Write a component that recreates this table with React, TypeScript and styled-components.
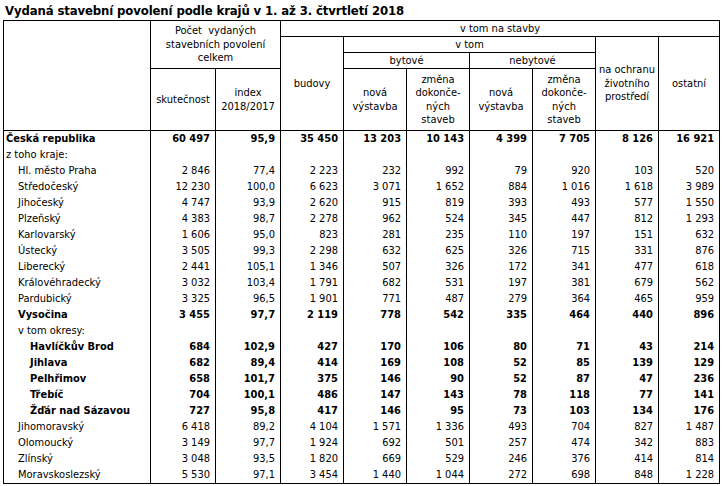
import React, { FC } from 'react'
import styled, { createGlobalStyle } from 'styled-components'

const GlobalStyle = createGlobalStyle`
  body {
    margin: 0;
    background: #fff;
    color: #000;
    font-family: "DejaVu Sans Condensed", "DejaVu Sans", sans-serif;
  }
`

const Page = styled.div`
  padding: 0 0 0 3px;
  width: 716px;
`

const Title = styled.h1`
  margin: 0;
  padding: 3px 0 0 2px;
  height: 20px;
  box-sizing: border-box;
  font-size: 13px;
  line-height: 15px;
  font-weight: 700;
  letter-spacing: -0.12px;
  white-space: nowrap;
`

const Table = styled.table`
  border-collapse: collapse;
  table-layout: fixed;
  width: 716px;
  font-size: 11px;
  border: 1px solid #000;
`

const HeadRow = styled.tr<{ $h: number }>`
  height: ${(p) => p.$h}px;
`

const Th = styled.th`
  border: 1px solid #000;
  padding: 0 1px;
  font-weight: 400;
  text-align: center;
  vertical-align: middle;
  line-height: 13.5px;
  white-space: nowrap;
`

const BodyRow = styled.tr<{ $bold?: boolean }>`
  height: 16px;
  font-weight: ${(p) => (p.$bold ? 700 : 400)};

  &:last-child td {
    border-bottom: 1px solid #000;
  }
`

const Label = styled.td<{ $level: number }>`
  border-left: 1px solid #000;
  border-right: 1px solid #000;
  padding: 0 2px 0 ${(p) => 2 + p.$level * 12}px;
  line-height: 16px;
  white-space: nowrap;
`

const Num = styled.td`
  border-left: 1px solid #000;
  border-right: 1px solid #000;
  padding: 0 5px 0 2px;
  text-align: right;
  line-height: 16px;
  white-space: nowrap;
`

const widths = [147, 65, 65, 63, 63, 63, 63, 63, 63, 61]

type Row = {
  label: string
  level: number
  bold?: boolean
  values?: string[]
}

const rows: Row[] = [
  { label: 'Česká republika', level: 0, bold: true, values: ['60 497', '95,9', '35 450', '13 203', '10 143', '4 399', '7 705', '8 126', '16 921'] },
  { label: 'z toho kraje:', level: 0 },
  { label: 'Hl. město Praha', level: 1, values: ['2 846', '77,4', '2 223', '232', '992', '79', '920', '103', '520'] },
  { label: 'Středočeský', level: 1, values: ['12 230', '100,0', '6 623', '3 071', '1 652', '884', '1 016', '1 618', '3 989'] },
  { label: 'Jihočeský', level: 1, values: ['4 747', '93,9', '2 620', '915', '819', '393', '493', '577', '1 550'] },
  { label: 'Plzeňský', level: 1, values: ['4 383', '98,7', '2 278', '962', '524', '345', '447', '812', '1 293'] },
  { label: 'Karlovarský', level: 1, values: ['1 606', '95,0', '823', '281', '235', '110', '197', '151', '632'] },
  { label: 'Ústecký', level: 1, values: ['3 505', '99,3', '2 298', '632', '625', '326', '715', '331', '876'] },
  { label: 'Liberecký', level: 1, values: ['2 441', '105,1', '1 346', '507', '326', '172', '341', '477', '618'] },
  { label: 'Královéhradecký', level: 1, values: ['3 032', '103,4', '1 791', '682', '531', '197', '381', '679', '562'] },
  { label: 'Pardubický', level: 1, values: ['3 325', '96,5', '1 901', '771', '487', '279', '364', '465', '959'] },
  { label: 'Vysočina', level: 1, bold: true, values: ['3 455', '97,7', '2 119', '778', '542', '335', '464', '440', '896'] },
  { label: 'v tom okresy:', level: 1 },
  { label: 'Havlíčkův Brod', level: 2, bold: true, values: ['684', '102,9', '427', '170', '106', '80', '71', '43', '214'] },
  { label: 'Jihlava', level: 2, bold: true, values: ['682', '89,4', '414', '169', '108', '52', '85', '139', '129'] },
  { label: 'Pelhřimov', level: 2, bold: true, values: ['658', '101,7', '375', '146', '90', '52', '87', '47', '236'] },
  { label: 'Třebíč', level: 2, bold: true, values: ['704', '100,1', '486', '147', '143', '78', '118', '77', '141'] },
  { label: 'Žďár nad Sázavou', level: 2, bold: true, values: ['727', '95,8', '417', '146', '95', '73', '103', '134', '176'] },
  { label: 'Jihomoravský', level: 1, values: ['6 418', '89,2', '4 104', '1 571', '1 336', '493', '704', '827', '1 487'] },
  { label: 'Olomoucký', level: 1, values: ['3 149', '97,7', '1 924', '692', '501', '257', '474', '342', '883'] },
  { label: 'Zlínský', level: 1, values: ['3 048', '93,5', '1 820', '669', '529', '246', '376', '414', '814'] },
  { label: 'Moravskoslezský', level: 1, values: ['5 530', '97,1', '3 454', '1 440', '1 044', '272', '698', '848', '1 228'] },
]

const nb = (s: string) => s.replace(/ /g, '\u00a0')

export const App: FC = () => {
  return (
    <Page>
      <GlobalStyle />
      <Title>Vydaná stavební povolení podle krajů v 1. až 3. čtvrtletí 2018</Title>
      <Table>
        <colgroup>
          {widths.map((w, i) => (
            <col key={i} style={{ width: w }} />
          ))}
        </colgroup>
        <thead>
          <HeadRow $h={16}>
            <Th rowSpan={4} />
            <Th colSpan={2} rowSpan={3}>
              Počet&nbsp; vydaných
              <br />
              stavebních povolení
              <br />
              celkem
            </Th>
            <Th colSpan={7}>v tom na stavby</Th>
          </HeadRow>
          <HeadRow $h={16}>
            <Th rowSpan={3}>budovy</Th>
            <Th colSpan={4}>v tom</Th>
            <Th rowSpan={3}>
              na ochranu
              <br />
              životního
              <br />
              prostředí
            </Th>
            <Th rowSpan={3}>ostatní</Th>
          </HeadRow>
          <HeadRow $h={16}>
            <Th colSpan={2}>bytové</Th>
            <Th colSpan={2}>nebytové</Th>
          </HeadRow>
          <HeadRow $h={62}>
            <Th>skutečnost</Th>
            <Th>
              index
              <br />
              2018/2017
            </Th>
            <Th>
              nová
              <br />
              výstavba
            </Th>
            <Th>
              změna
              <br />
              dokonče-
              <br />
              ných
              <br />
              staveb
            </Th>
            <Th>
              nová
              <br />
              výstavba
            </Th>
            <Th>
              změna
              <br />
              dokonče-
              <br />
              ných
              <br />
              staveb
            </Th>
          </HeadRow>
        </thead>
        <tbody>
          {rows.map((r) => (
            <BodyRow key={r.label} $bold={r.bold}>
              <Label $level={r.level}>{r.label}</Label>
              {Array.from({ length: 9 }).map((_, i) => (
                <Num key={i}>{r.values ? nb(r.values[i]) : ''}</Num>
              ))}
            </BodyRow>
          ))}
        </tbody>
      </Table>
    </Page>
  )
}

export default App
